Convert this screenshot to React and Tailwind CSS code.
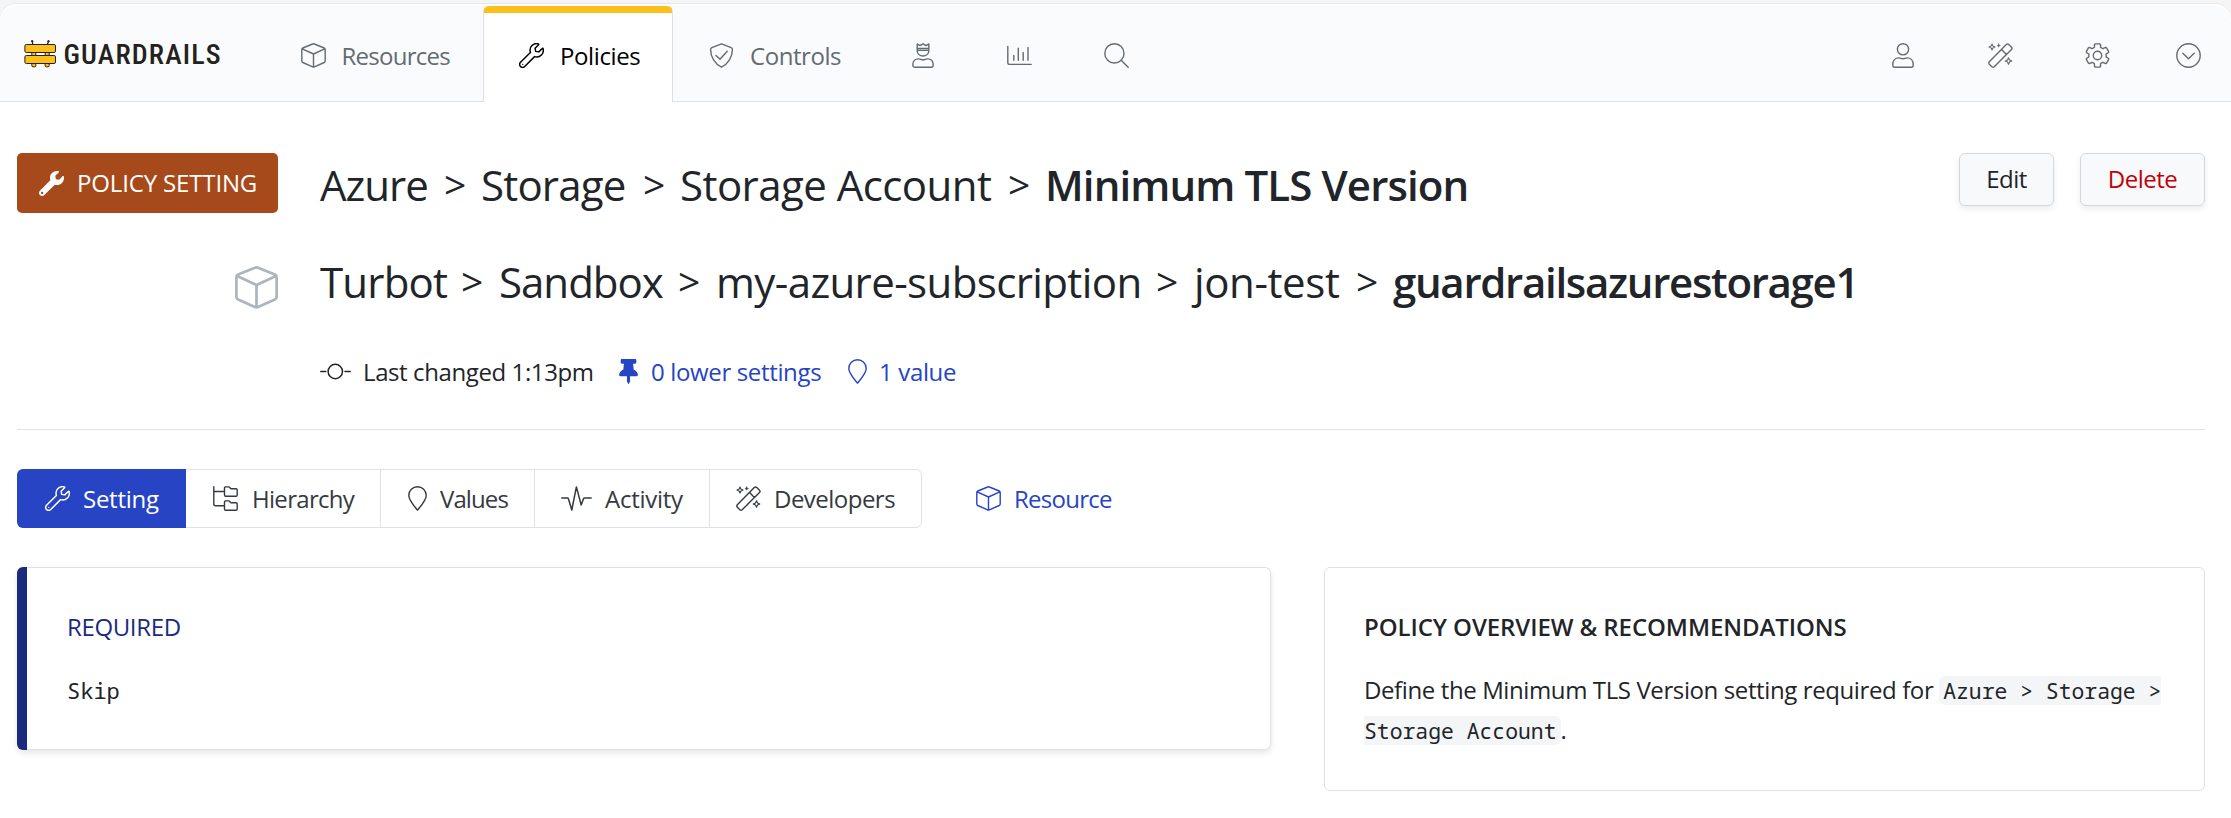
import React from 'react';
import { FaWrench, FaThumbtack } from 'react-icons/fa';

function Svg({ box = '0 0 25 25', className = '', w = 1.4, children }) {
  return (
    <svg viewBox={box} className={`shrink-0 ${className}`} fill="none" stroke="currentColor" strokeWidth={w} strokeLinecap="round" strokeLinejoin="round">
      {children}
    </svg>
  );
}

const Cube = ({ className, w }) => (
  <Svg className={className} w={w}>
    <path d="M11.6 1 L1.8 5 Q.8 5.5 .8 6.6 V18 Q.8 19 1.8 19.5 L11.6 23.8 Q12.5 24.2 13.4 23.8 L23.2 19.5 Q24.2 19 24.2 18 V6.6 Q24.2 5.5 23.2 5 L13.4 1 Q12.5 .6 11.6 1 Z M1.2 5.8 L12.5 11 L23.8 5.8 M12.5 11 V23.8" />
  </Svg>
);

const Wrench = ({ className }) => (
  <Svg box="-14 -14 540 540" className={className} w={32}>
    <path d="M507.73 109.1c-2.24-9.03-13.54-12.09-20.12-5.51l-74.36 74.36-67.88-11.31-11.31-67.88 74.36-74.36c6.62-6.62 3.43-17.9-5.66-20.16-47.38-11.74-99.55.91-136.58 37.93-39.64 39.64-50.55 97.1-34.05 147.2L18.74 402.76c-24.99 24.99-24.99 65.51 0 90.5 24.99 24.99 65.51 24.99 90.5 0l213.21-213.21c50.12 16.71 107.47 5.68 147.37-34.22 37.07-37.07 49.7-89.32 37.91-136.73z" />
    <circle cx="66" cy="446" r="14" fill="currentColor" stroke="none" />
  </Svg>
);

const Wand = ({ className }) => (
  <Svg className={className}>
    <path d="M18.3 1.5 L1.3 18.8 Q.3 20 1.3 21.2 L3.9 23.8 Q5 24.7 6.2 23.7 L23.5 6.6 Q24.5 5.4 23.5 4.2 L20.8 1.5 Q19.6 .5 18.3 1.5 Z M13.6 6.5 L18.4 11.4" />
    <path strokeWidth="1.1" d="M4 1 L4.9 3.1 L7 4 L4.9 4.9 L4 7 L3.1 4.9 L1 4 L3.1 3.1 Z M20.5 14.8 L21.5 17 L23.8 18 L21.5 19 L20.5 21.3 L19.5 19 L17.2 18 L19.5 17 Z" />
    <path fill="currentColor" strokeWidth=".4" d="M10.7 .7 L11.3 1.9 L12.5 2.5 L11.3 3.1 L10.7 4.3 L10.1 3.1 L8.9 2.5 L10.1 1.9 Z" />
  </Svg>
);

const Pin = ({ className }) => (
  <Svg box="0 0 19 25" className={className}>
    <path d="M9.5 24.2 C8 22 .8 14.5 .8 9.4 A8.7 8.7 0 0 1 18.2 9.4 C18.2 14.5 11 22 9.5 24.2 Z" />
  </Svg>
);

const User = ({ className }) => (
  <Svg box="0 0 22 25" className={className}>
    <circle cx="11" cy="6.3" r="5.6" />
    <path d="M.8 21.5 C.8 17.5 3.2 14.9 6.8 14.9 C8.6 14.9 9.2 15.7 11 15.7 S13.4 14.9 15.2 14.9 C18.8 14.9 21.2 17.5 21.2 21.5 V22.3 Q21.2 24.2 19.3 24.2 H2.7 Q.8 24.2 .8 22.3 Z" />
  </Svg>
);

const King = ({ className }) => (
  <Svg box="0 0 22 25" className={className}>
    <path d="M5.2 .9 L8 2.6 L11 .8 L14 2.6 L16.8 .9 V7.6 C16.8 11 14.2 13 11 13 S5.2 11 5.2 7.6 Z M5.4 5.4 H16.6 M5.4 7.2 H16.6" />
    <path d="M.8 22 C.8 18 3 15.9 6.6 15.9 C8.4 15.9 9.2 17 11 17 S13.6 15.9 15.4 15.9 C19 15.9 21.2 18 21.2 22 Q21.2 24.2 19.3 24.2 H2.7 Q.8 24.2 .8 22 Z" />
  </Svg>
);

const gearPath = (() => {
  const pts = [];
  const at = (r, deg) => {
    const a = (deg * Math.PI) / 180;
    pts.push(`${(12.5 + r * Math.cos(a)).toFixed(2)} ${(12.5 + r * Math.sin(a)).toFixed(2)}`);
  };
  for (let k = 0; k < 6; k++) {
    const c = -90 + 60 * k;
    at(8.7, c - 21);
    at(11.5, c - 15);
    at(11.8, c - 10);
    at(11.8, c + 10);
    at(11.5, c + 15);
    at(8.7, c + 21);
  }
  return `M${pts.join(' L')} Z`;
})();

const Gear = ({ className }) => (
  <Svg className={className}>
    <path d={gearPath} />
    <circle cx="12.5" cy="12.5" r="4.2" />
  </Svg>
);

const Logo = () => (
  <svg viewBox="0 0 32 28" className="h-7 w-8 shrink-0" fill="#fdc01a" stroke="#23221c" strokeWidth="1">
    <path d="M8.8 4.5 L8.3 1.5 M23.4 4.5 L24.4 1.5" strokeWidth="1.2" />
    <circle cx="8.2" cy="1.2" r=".8" fill="#23221c" />
    <circle cx="24.5" cy="1.2" r=".8" fill="#23221c" />
    <path d="M7.8 11 V25.6 Q7.8 26.8 9 26.8 H10.7 Q11.8 26.8 11.8 25.6 V11 Z M21.2 11 V25.6 Q21.2 26.8 22.4 26.8 H24.1 Q25.2 26.8 25.2 25.6 V11 Z" />
    <rect x=".9" y="4.5" width="30.6" height="8" rx="1.4" />
    <rect x=".9" y="15.5" width="30.6" height="8" rx="1.4" />
  </svg>
);

const Gt = ({ className }) => <span className={`text-[39px] ${className}`}>&gt;</span>;

const sans = "font-['Open_Sans','Noto_Sans',sans-serif]";
const mono = "font-['Noto_Sans_Mono','DejaVu_Sans_Mono',monospace]";

export default function App() {
  return (
    <div className={`h-[818px] w-[2231px] overflow-hidden bg-[#f5f5f6] pt-[3px] text-[24px] text-[#212529] ${sans}`}>
      <div className="h-full rounded-t-2xl border-t border-[#e6e7e9] bg-white pt-0.5">
        <header className="flex h-24 rounded-t-2xl bg-[#fafbfd] text-[#636b72]">
          <div className="flex w-[483px] items-center border-b border-[#dddfe2] pt-px pl-6">
            <Logo />
            <span className="ml-[7.5px] w-[160px] pt-0.5 font-['Roboto_Condensed',Roboto,sans-serif] text-[28px] font-medium tracking-[1.15px] text-[#23221c]">GUARDRAILS</span>
            <Cube className="mt-0.5 ml-[77px] h-[25px] w-[25px]" />
            <span className="mt-1 ml-4 whitespace-nowrap tracking-[-0.75px]">Resources</span>
          </div>
          <div className="flex w-[190px] items-center rounded-t-md border-x border-t-[7px] border-x-[#dddfe2] border-t-[#fdc01a] bg-white pl-[35px] text-black">
            <Wrench className="-mt-1 h-[25px] w-[25px]" />
            <span className="-mt-[3px] ml-4 tracking-[-0.4px]">Policies</span>
          </div>
          <div className="flex flex-1 items-center border-b border-[#dddfe2] pt-[3px] pr-[30px] pl-[36px]">
            <Svg className="h-[25px] w-[25px]">
              <path d="M12.5 .8 L22.2 4.6 Q23.4 5.1 23.4 6.4 C23.4 14 19.2 21 12.5 24.2 C5.8 21 1.6 14 1.6 6.4 Q1.6 5.1 2.8 4.6 Z M7 12.4 L11 16.3 L18.2 8.2" />
            </Svg>
            <span className="ml-4 w-[91px] pt-px tracking-[-0.43px]">Controls</span>
            <King className="ml-[71px] h-[25px] w-[22px]" />
            <Svg className="ml-[73px] h-[25px] w-[25px]">
              <path d="M.8 3.5 V19.5 Q.8 21.4 2.7 21.4 H24.2 M6.8 12.5 V17.3 M11.3 5.3 V17.3 M16.2 9.5 V17.3 M21 4.5 V17.3" />
            </Svg>
            <Svg className="ml-[72px] h-[25px] w-[25px]">
              <circle cx="10.4" cy="10.4" r="9.6" />
              <path d="M17.2 17.2 L24.2 24.2" />
            </Svg>
            <User className="ml-auto h-[25px] w-[22px]" />
            <Wand className="ml-[74px] h-[25px] w-[25px]" />
            <Gear className="ml-[72px] h-[25px] w-[25px]" />
            <Svg className="ml-[66px] h-[25px] w-[25px]">
              <circle cx="12.5" cy="12.5" r="11.7" />
              <path d="M6.8 10.2 L12.5 15.8 L18.2 10.2" />
            </Svg>
          </div>
        </header>

        <main className="pt-[51px] pr-[26px] pl-[17px]">
          <div className="flex">
            <div className="flex h-[60px] w-[261px] items-center rounded-[5px] bg-[#a74a1b] pl-[22px] text-white">
              <FaWrench className="h-[25px] w-[25px]" />
              <span className="ml-[13px] whitespace-nowrap tracking-[-0.15px]">POLICY SETTING</span>
            </div>
            <h1 className="mt-px ml-[42px] flex h-[60px] items-center whitespace-nowrap text-[42px]">
              <span className="w-[124px] tracking-[-1px]">Azure</span>
              <Gt className="w-[37px]" />
              <span className="w-[162px] tracking-[-0.8px]">Storage</span>
              <Gt className="w-[37px]" />
              <span className="w-[328px] tracking-[-0.55px]">Storage Account</span>
              <Gt className="w-[37px]" />
              <span className="font-semibold tracking-[-0.88px]">Minimum TLS Version</span>
            </h1>
            <div className="ml-auto flex gap-[26px]">
              <button className="h-[53px] w-[95px] rounded-md border border-[#d3d8dd] bg-[#f8f9fb] pb-0.5 tracking-[-0.5px] shadow-[0_3px_6px_rgba(0,0,0,0.08)]">Edit</button>
              <button className="h-[53px] w-[125px] rounded-md border border-[#d3d8dd] bg-[#f8f9fb] pb-0.5 tracking-[-0.5px] text-[#c40008] shadow-[0_3px_6px_rgba(0,0,0,0.08)]">Delete</button>
            </div>
          </div>

          <div className="mt-[43px] flex h-[60px] items-center">
            <Cube className="ml-[218px] h-[43px] w-[43px] text-[#adb5bd]" w={1.6} />
            <div className="-mt-[11px] ml-[42px] flex items-center whitespace-nowrap text-[42px]">
              <span className="w-[141px] tracking-[-0.8px]">Turbot</span>
              <Gt className="w-[38px]" />
              <span className="w-[179px] tracking-[-1px]">Sandbox</span>
              <Gt className="w-[38px]" />
              <span className="w-[440px] tracking-[-0.6px]">my-azure-subscription</span>
              <Gt className="w-[38px]" />
              <span className="w-[162px] tracking-[-0.4px]">jon-test</span>
              <Gt className="w-[37px]" />
              <span className="font-semibold tracking-[-1.3px]">guardrailsazurestorage1</span>
            </div>
          </div>

          <div className="mt-[34px] ml-[303px] flex h-10 items-center whitespace-nowrap">
            <Svg box="0 0 31 25" className="h-[25px] w-[31px]" w={1.5}>
              <circle cx="15.3" cy="12.5" r="7.2" />
              <path d="M.8 12.5 H5.8 M25 12.5 H30.2" />
            </Svg>
            <span className="ml-3 w-[256px] pt-0.5 tracking-[-0.4px]">Last changed 1:13pm</span>
            <FaThumbtack className="h-[25px] w-[19px] text-[#2644c4]" />
            <span className="ml-[13px] w-[197px] pt-0.5 tracking-[-0.35px] text-[#2644c4]">0 lower settings</span>
            <Pin className="h-[25px] w-[19px] text-[#2644c4]" />
            <span className="ml-3 pt-0.5 tracking-[-0.35px] text-[#2644c4]">1 value</span>
          </div>

          <hr className="mt-[38px] border-[#e1e3e5]" />

          <div className="mt-[39px] flex h-[59px] text-[#343a40]">
            <nav className="flex w-[905px] rounded-md border border-[#dee2e6] whitespace-nowrap">
              <div className="-my-px -ml-px flex w-[169px] items-center rounded-l-md bg-[#2644c4] pl-7 text-white">
                <Wrench className="h-[25px] w-[25px]" />
                <span className="ml-[13px] tracking-[-0.27px]">Setting</span>
              </div>
              <div className="flex w-[195px] items-center border-r border-[#dee2e6] pl-[27px]">
                <Svg className="h-[25px] w-[25px]">
                  <path d="M.8 .8 V18 Q.8 19.8 2.6 19.8 H11 M.8 5.5 H11 M11.5 2 Q11.5 .9 12.6 .9 H16 L18 2.7 H23 Q24.2 2.7 24.2 3.9 V9 Q24.2 10.2 23 10.2 H12.7 Q11.5 10.2 11.5 9 Z M11.5 16 Q11.5 14.9 12.6 14.9 H16 L18 16.7 H23 Q24.2 16.7 24.2 17.9 V23 Q24.2 24.2 23 24.2 H12.7 Q11.5 24.2 11.5 23 Z" />
                </Svg>
                <span className="ml-3.5 tracking-[-0.7px]">Hierarchy</span>
              </div>
              <div className="flex w-[154px] items-center border-r border-[#dee2e6] pl-[27px]">
                <Pin className="h-[25px] w-[19px]" />
                <span className="ml-[13px] tracking-[-0.9px]">Values</span>
              </div>
              <div className="flex w-[175px] items-center border-r border-[#dee2e6] pl-[26px]">
                <Svg box="0 0 31 25" className="h-[25px] w-[31px]" w={1.5}>
                  <path d="M.8 12 H6.3 Q7.1 12 7.4 12.8 L10.8 24 L15.4 .9 L20.2 19 L22.5 12.8 Q22.8 12 23.6 12 H30.2" />
                </Svg>
                <span className="ml-[13px] tracking-[-0.27px]">Activity</span>
              </div>
              <div className="flex flex-1 items-center pl-[26px]">
                <Wand className="h-[25px] w-[25px]" />
                <span className="ml-[13px] tracking-[-0.52px]">Developers</span>
              </div>
            </nav>
            <a className="ml-[54px] flex items-center text-[#2644c4]">
              <Cube className="h-[25px] w-[25px]" />
              <span className="ml-[13px] tracking-[-0.75px]">Resource</span>
            </a>
          </div>

          <div className="mt-[39px] flex items-start justify-between leading-[40px]">
            <section className="flex h-[183px] w-[1254px] rounded-md border border-l-0 border-[#dee2e6] shadow-[0_3px_6px_rgba(0,0,0,0.1)]">
              <div className="-my-px w-2.5 rounded-l-md bg-[#1a2b7e]" />
              <div className="pt-[39px] pl-10">
                <h2 className="tracking-[-0.36px] text-[#1a2b7e]">REQUIRED</h2>
                <p className={`mt-[23px] text-[22px] ${mono}`}>Skip</p>
              </div>
            </section>
            <section className="h-[224px] w-[881px] rounded-md border border-[#dee2e6] px-[39px] pt-[39px]">
              <h2 className="font-semibold tracking-[-0.08px]">POLICY OVERVIEW &amp; RECOMMENDATIONS</h2>
              <p className="mt-[23px] tracking-[-0.39px]">
                Define the Minimum TLS Version setting required for{' '}
                <code className={`rounded-md bg-[#f4f5f7] px-1 text-[21.4px] leading-none tracking-normal ${mono}`}>Azure &gt; Storage &gt; Storage Account</code>.
              </p>
            </section>
          </div>
        </main>
      </div>
    </div>
  );
}
